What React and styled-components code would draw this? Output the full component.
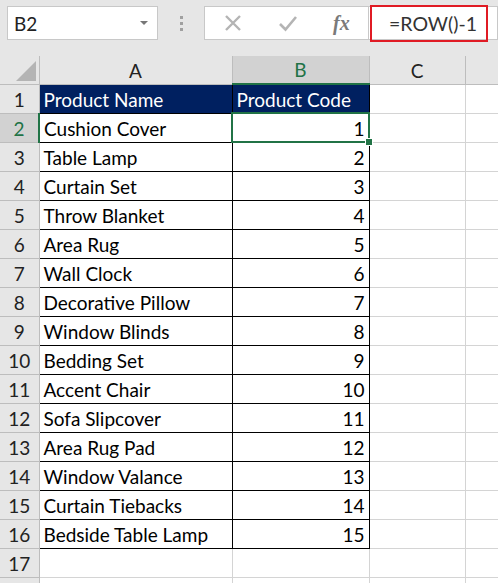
import React from "react";
import styled, { createGlobalStyle } from "styled-components";

const Global = createGlobalStyle`
  html, body { margin: 0; padding: 0; background: #e6e6e6; }
  body { width: 498px; height: 583px; overflow: hidden; }
`;

const font = `"Lato", "Noto Sans", sans-serif`;

const Page = styled.div`
  width: 498px;
  height: 583px;
  background: #e6e6e6;
  overflow: hidden;
  font-family: ${font};
`;

const FormulaRow = styled.div`
  display: flex;
  align-items: flex-start;
  height: 56px;
  box-sizing: border-box;
  padding: 6px 0 0 7px;
`;

const NameBox = styled.div`
  width: 151px;
  height: 34px;
  box-sizing: border-box;
  background: #fff;
  border: 1px solid #c8c8c8;
  display: flex;
  align-items: center;
  justify-content: space-between;
  padding: 0 9px 0 6px;
  font-size: 19px;
  color: #222;
`;

const Caret = styled.span`
  width: 0;
  height: 0;
  border-left: 4px solid transparent;
  border-right: 4px solid transparent;
  border-top: 4px solid #777;
`;

const Dots = styled.div`
  width: 46px;
  height: 34px;
  display: flex;
  flex-direction: column;
  align-items: center;
  justify-content: center;
  gap: 3px;
  span {
    width: 3px;
    height: 3px;
    background: #a0a0a0;
  }
`;

const Controls = styled.div`
  width: 165px;
  height: 34px;
  box-sizing: border-box;
  background: #fff;
  border: 1px solid #c8c8c8;
  display: flex;
  align-items: center;
`;

const ControlBtn = styled.span`
  width: 55px;
  display: flex;
  align-items: center;
  justify-content: center;
`;

const Fx = styled.span`
  font-family: "Liberation Serif", "DejaVu Serif", serif;
  font-style: italic;
  font-weight: bold;
  font-size: 20px;
  color: #7a7a7a;
  margin-left: 18px;
`;

const FormulaInput = styled.div`
  flex: 1;
  height: 34px;
  box-sizing: border-box;
  background: #fff;
  border: 1px solid #c8c8c8;
  border-left: none;
  display: flex;
  align-items: center;
`;

const Highlight = styled.div`
  margin: -2px 0 -3px 1px;
  width: 118px;
  height: 37px;
  box-sizing: border-box;
  border: 2.5px solid #e01b24;
  display: flex;
  align-items: center;
  padding-left: 17px;
  font-size: 19.5px;
  color: #333;
`;

const Sheet = styled.table`
  border-collapse: collapse;
  table-layout: fixed;
  width: 520px;
  font-family: ${font};
  font-size: 19px;
`;

const ColHeadRow = styled.tr`
  height: 28px;
`;

const BodyRow = styled.tr`
  height: 29px;
`;

const Corner = styled.th`
  background: #e6e6e6;
  border-right: 1px solid #bdbdbd;
  border-bottom: 1px solid #bdbdbd;
  position: relative;
  padding: 0;
  &::after {
    content: "";
    position: absolute;
    right: 3px;
    bottom: 3px;
    width: 0;
    height: 0;
    border-left: 20px solid transparent;
    border-bottom: 20px solid #b4b4b4;
  }
`;

const ColHead = styled.th`
  background: ${(p) => (p.$selected ? "#d2d2d2" : "#e6e6e6")};
  color: ${(p) => (p.$selected ? "#217346" : "#222")};
  font-weight: normal;
  border-right: 1px solid #bdbdbd;
  border-bottom: ${(p) => (p.$selected ? "2px solid #217346" : "1px solid #bdbdbd")};
  padding: 0;
  vertical-align: bottom;
  line-height: 26px;
  text-align: center;
`;

const RowHead = styled.td`
  background: ${(p) => (p.$selected ? "#d2d2d2" : "#e6e6e6")};
  color: ${(p) => (p.$selected ? "#217346" : "#222")};
  border-bottom: 1px solid #bdbdbd;
  border-right: ${(p) => (p.$selected ? "2px solid #217346" : "1px solid #bdbdbd")};
  text-align: center;
  padding: 0;
  vertical-align: bottom;
  line-height: 26px;
`;

const Cell = styled.td`
  position: relative;
  padding: 0 4px;
  vertical-align: bottom;
  line-height: 26px;
  white-space: nowrap;
  overflow: visible;
  color: ${(p) => (p.$head ? "#fff" : "#000")};
  background: ${(p) => (p.$head ? "#002060" : "#fff")};
  text-align: ${(p) => (p.$num ? "right" : "left")};
  border: 1px solid ${(p) => (p.$boxed ? "#000" : "#d4d4d4")};
  ${(p) =>
    p.$active &&
    `
    outline: 2px solid #217346;
    outline-offset: -1px;
    &::after {
      content: "";
      position: absolute;
      right: -4px;
      bottom: -4px;
      width: 6px;
      height: 6px;
      background: #217346;
      border: 1px solid #fff;
      z-index: 2;
    }
  `}
`;

const products = [
  "Cushion Cover",
  "Table Lamp",
  "Curtain Set",
  "Throw Blanket",
  "Area Rug",
  "Wall Clock",
  "Decorative Pillow",
  "Window Blinds",
  "Bedding Set",
  "Accent Chair",
  "Sofa Slipcover",
  "Area Rug Pad",
  "Window Valance",
  "Curtain Tiebacks",
  "Bedside Table Lamp",
];

export default function App() {
  return (
    <Page>
      <Global />
      <FormulaRow>
        <NameBox>
          <span>B2</span>
          <Caret />
        </NameBox>
        <Dots>
          <span />
          <span />
          <span />
        </Dots>
        <Controls>
          <ControlBtn>
            <svg width="18" height="18" viewBox="0 0 18 18">
              <path d="M2 2 L16 16 M16 2 L2 16" stroke="#b4b4b4" strokeWidth="2.4" />
            </svg>
          </ControlBtn>
          <ControlBtn>
            <svg width="20" height="18" viewBox="0 0 20 18">
              <path d="M2 10 L7.5 15.5 L18 3" stroke="#b4b4b4" strokeWidth="2.6" fill="none" />
            </svg>
          </ControlBtn>
          <Fx>fx</Fx>
        </Controls>
        <FormulaInput>
          <Highlight>=ROW()-1</Highlight>
        </FormulaInput>
      </FormulaRow>
      <Sheet>
        <colgroup>
          <col style={{ width: 39 }} />
          <col style={{ width: 193 }} />
          <col style={{ width: 137 }} />
          <col style={{ width: 96 }} />
          <col style={{ width: 55 }} />
        </colgroup>
        <thead>
          <ColHeadRow>
            <Corner />
            <ColHead>A</ColHead>
            <ColHead $selected>B</ColHead>
            <ColHead>C</ColHead>
            <ColHead />
          </ColHeadRow>
        </thead>
        <tbody>
          <BodyRow>
            <RowHead>1</RowHead>
            <Cell $boxed $head>Product Name</Cell>
            <Cell $boxed $head>Product Code</Cell>
            <Cell />
            <Cell />
          </BodyRow>
          {products.map((name, i) => (
            <BodyRow key={name}>
              <RowHead $selected={i === 0}>{i + 2}</RowHead>
              <Cell $boxed>{name}</Cell>
              <Cell $boxed $num $active={i === 0}>
                {i + 1}
              </Cell>
              <Cell />
              <Cell />
            </BodyRow>
          ))}
          <BodyRow>
            <RowHead>17</RowHead>
            <Cell />
            <Cell />
            <Cell />
            <Cell />
          </BodyRow>
          <BodyRow>
            <RowHead />
            <Cell />
            <Cell />
            <Cell />
            <Cell />
          </BodyRow>
        </tbody>
      </Sheet>
    </Page>
  );
}
